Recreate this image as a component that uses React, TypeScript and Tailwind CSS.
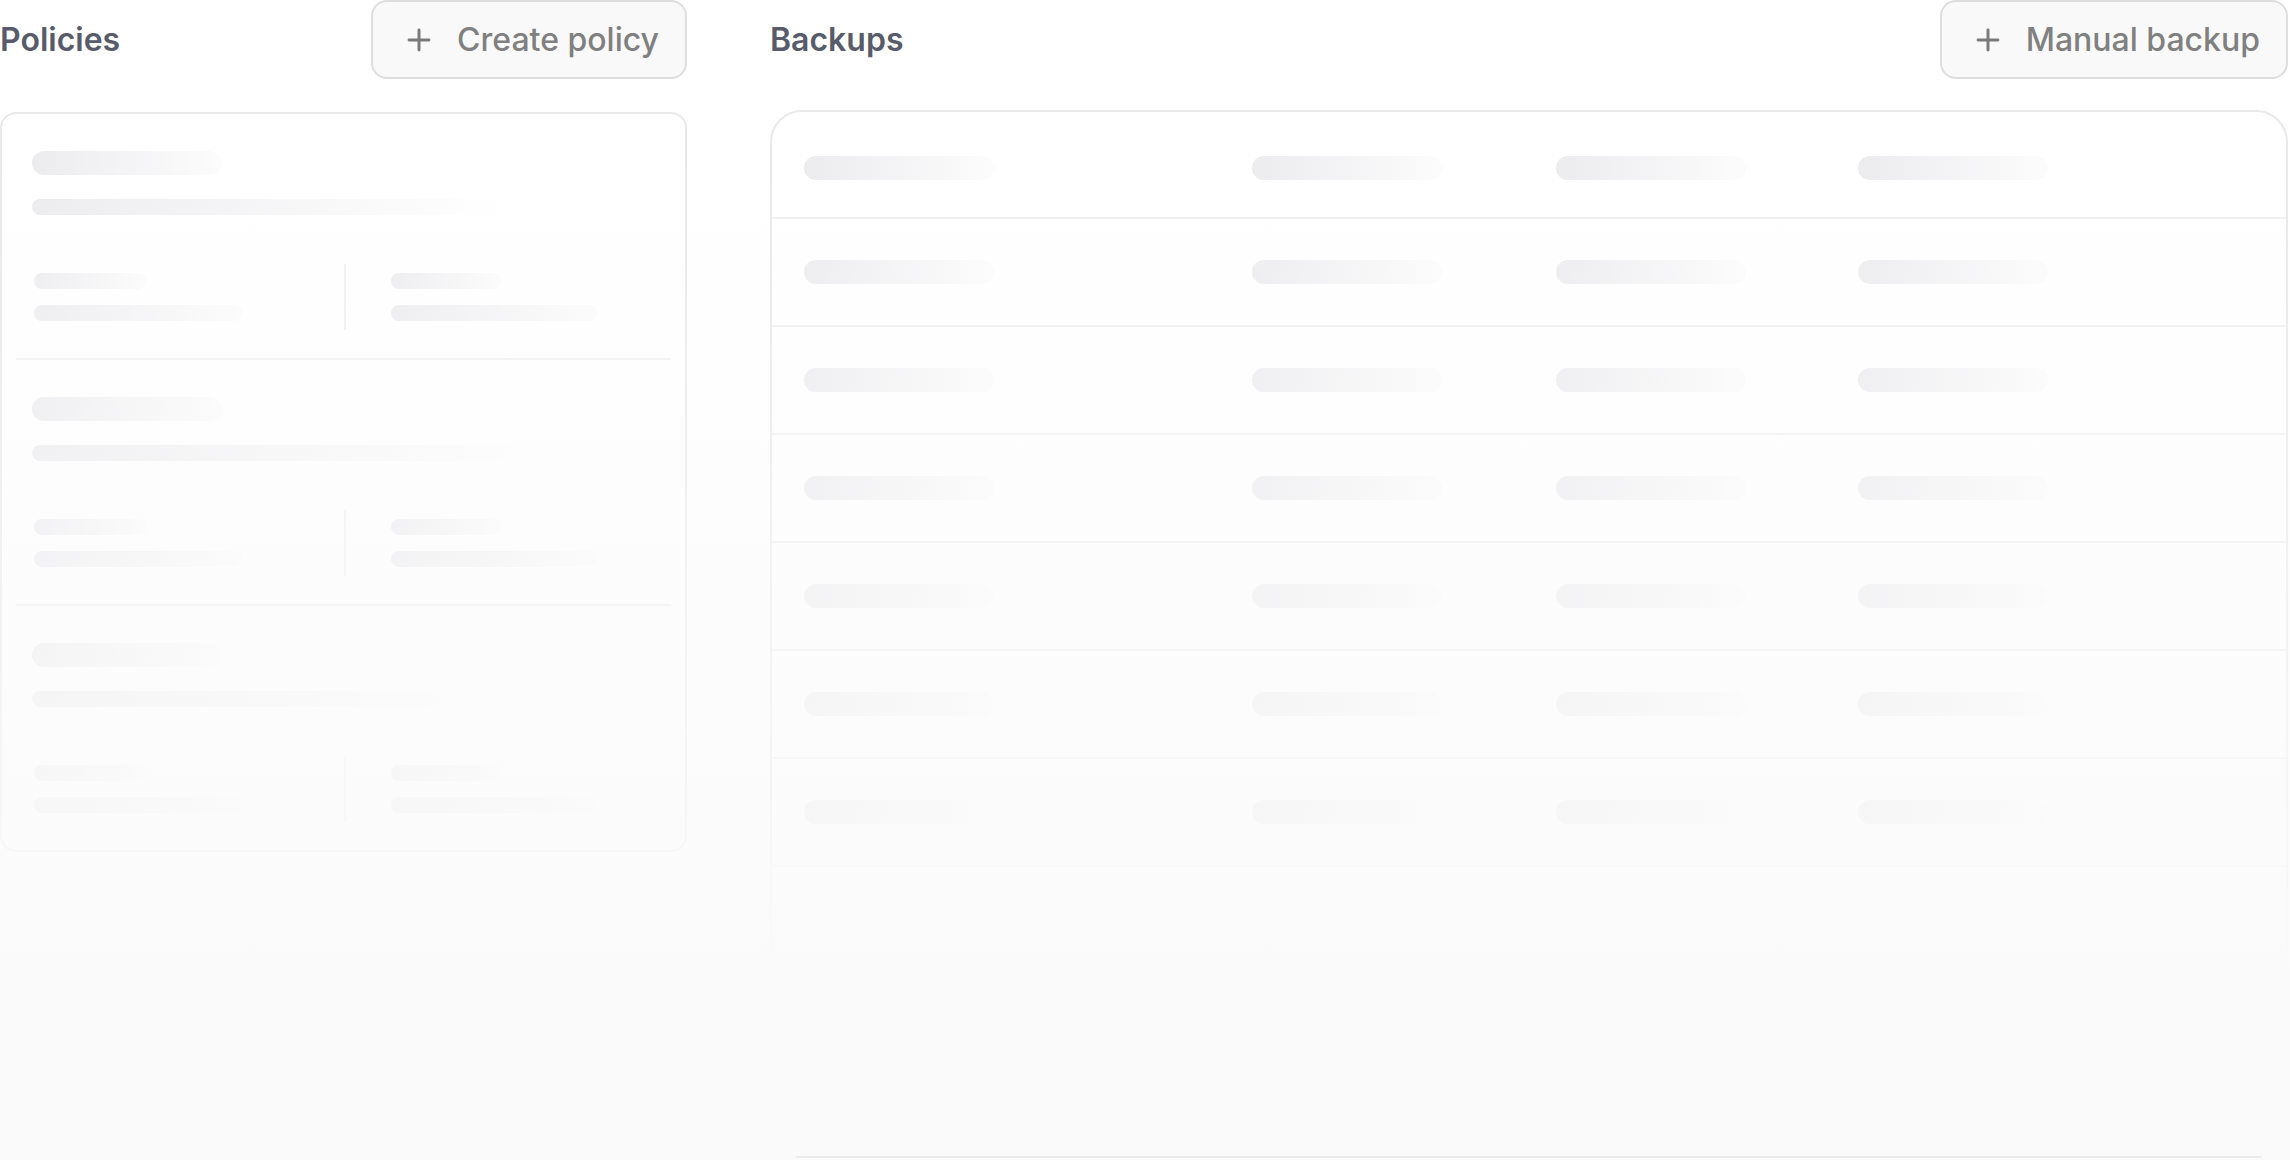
import { Plus } from "lucide-react";

const policySections = [
  { long: "w-[470px]" },
  { long: "w-[500px]" },
  { long: "w-[440px]" },
];

const backupRows = Array.from({ length: 6 }, (_, i) => i);

const Bar = ({ className }: { className: string }) => (
  <div
    className={`rounded-full bg-gradient-to-r from-[#ececef] to-[#ececef]/15 ${className}`}
  />
);

const FadeBar = ({ className }: { className: string }) => (
  <div
    className={`rounded-full bg-gradient-to-r from-[#ececef] via-[#ececef]/50 to-transparent ${className}`}
  />
);

const HeaderButton = ({ label }: { label: string }) => (
  <button className="flex items-center h-[79px] gap-[21px] pl-[29px] pr-[26px] rounded-[16px] border-2 border-[#dedede] bg-[#f9f9f9] text-[#808080]">
    <Plus size={34} strokeWidth={2.1} className="text-[#7a7a7a]" />
    <span className="text-[32px] font-medium leading-none">{label}</span>
  </button>
);

export default function App() {
  return (
    <div
      className="relative h-[1160px] w-full overflow-hidden bg-white"
      style={{ fontFamily: "Inter, 'Noto Sans', sans-serif" }}
    >
      <div className="flex h-full gap-[83px]">
        {/* Policies */}
        <div className="flex flex-col w-[687px] shrink-0">
          <div className="flex items-center justify-between h-[79px]">
            <h2 className="text-[32px] font-semibold text-[#575b6a] leading-none">
              Policies
            </h2>
            <HeaderButton label="Create policy" />
          </div>

          <div className="mt-[33px] rounded-[16px] border-2 border-[#e9e9e9] bg-white">
            {policySections.map((s, i) => (
              <div key={i}>
                {i > 0 && <div className="mx-[14px] h-[2px] bg-[#f0f0f0]" />}
                <div className="pt-[37px] pb-[28px]">
                  <div className="px-[30px]">
                    <Bar className="w-[190px] h-[24px]" />
                    <FadeBar className={`mt-[24px] h-[16px] ${s.long}`} />
                  </div>
                  <div className="mt-[49px] flex h-[66px]">
                    <div className="flex w-[342px] flex-col justify-center gap-[16px] pl-[32px]">
                      <Bar className="w-[112px] h-[16px]" />
                      <Bar className="w-[208px] h-[16px]" />
                    </div>
                    <div className="w-[2px] bg-[#f0f0f0]" />
                    <div className="flex flex-1 flex-col justify-center gap-[16px] pl-[45px]">
                      <Bar className="w-[110px] h-[16px]" />
                      <Bar className="w-[206px] h-[16px]" />
                    </div>
                  </div>
                </div>
              </div>
            ))}
          </div>
        </div>

        {/* Backups */}
        <div className="flex flex-col flex-1 min-w-0 pr-[2px]">
          <div className="flex items-center justify-between h-[79px]">
            <h2 className="text-[32px] font-semibold text-[#575b6a] leading-none">
              Backups
            </h2>
            <HeaderButton label="Manual backup" />
          </div>

          <div className="relative mt-[31px] flex-1 min-h-0 overflow-hidden rounded-[32px] border-2 border-[#e9e9e9] bg-white after:absolute after:bottom-0 after:left-[24px] after:right-[24px] after:z-20 after:h-[2px] after:bg-[#ebebeb]">
            <div className="grid grid-cols-[448px_304px_302px_1fr] items-center h-[107px] pt-[6px] border-b-2 border-[#f0f0f0]">
              {[0, 1, 2, 3].map((c) => (
                <div key={c} className="pl-[32px]">
                  <Bar className="w-[190px] h-[24px]" />
                </div>
              ))}
            </div>
            {backupRows.map((r) => (
              <div
                key={r}
                className="grid grid-cols-[448px_304px_302px_1fr] items-center h-[108px] border-b-2 border-[#f0f0f0]"
              >
                {[0, 1, 2, 3].map((c) => (
                  <div key={c} className="pl-[32px]">
                    <Bar className="w-[190px] h-[24px]" />
                  </div>
                ))}
              </div>
            ))}
          </div>
        </div>
      </div>

      {/* loading fade */}
      <div className="pointer-events-none absolute inset-0 z-10 bg-[linear-gradient(to_bottom,rgba(250,250,250,0)_14%,rgba(250,250,250,0.5)_50%,rgba(250,250,250,0.78)_72%,#fafafa_84%)]" />
    </div>
  );
}
